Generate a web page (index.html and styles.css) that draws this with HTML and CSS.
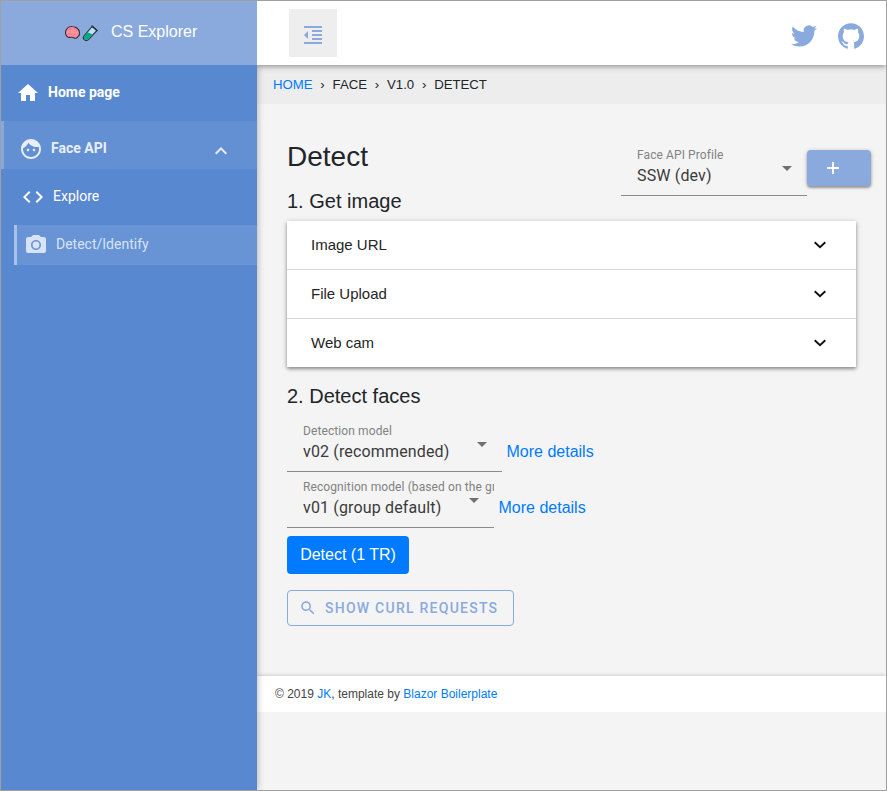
FILE: index.html
```html
<!DOCTYPE html>
<html lang="en">
<head>
<meta charset="utf-8">
<title>CS Explorer</title>
<link rel="stylesheet" href="styles.css">
</head>
<body>
<div class="app">
  <aside class="sidebar">
    <div class="brand">
      <svg class="brand-icons" width="36" height="20" viewBox="0 0 36 20">
        <path d="M1.5 9.500C1.500 6 4.500 3.300 8.200 3.500c3.800 0 7 2.600 7.300 5.800.2 2.200-.2 3.700-1.500 4.100-.6 1.600-2.100 2.200-3.500 1.600-1.500-.5-2.300-.9-3.700-.7C3.500 15 1.500 12.500 1.500 9.500z" fill="#f8919d" stroke="#3b2a32" stroke-width="1.100"/>
        <path d="M4 8c1-2 3-2.500 4.500-1.500M10 5.500c2 0 3 1.500 2.500 3M3.500 11.500c1.500-1.500 3-1 4 0s3 .5 4-.5" fill="none" stroke="#d65f74" stroke-width=".5"/>
        <path d="M28.200 3.500l4.800 4-8.300 8.800c-1.300 1.300-3.300 1.500-4.500.4s-1-3 .2-4.400z" fill="#b9e4f4" stroke="#26343d" stroke-width="1.100"/>
        <path d="M23.500 9.200l5.200 2.200-4.500 4.700c-1.100 1.100-2.600 1.200-3.600.3s-.8-2.400.2-3.700z" fill="#08a982"/>
        <path d="M28 3l5 4.500" stroke="#26343d" stroke-width="1.500" stroke-linecap="round"/>
      </svg>
      <span>CS Explorer</span>
    </div>
    <nav>
      <a class="nav-item home"><svg class="icon" viewBox="0 0 24 24"><path d="M10 20v-6h4v6h5v-8h3L12 3 2 12h3v8z"/></svg><span>Home page</span></a>
      <a class="nav-item group"><svg class="icon" viewBox="0 0 24 24"><path d="M9 11.750c-.69 0-1.250.56-1.250 1.250s.56 1.250 1.250 1.250 1.250-.56 1.250-1.250-.56-1.250-1.250-1.250zm6 0c-.69 0-1.250.56-1.250 1.250s.56 1.250 1.250 1.250 1.250-.56 1.250-1.250-.56-1.250-1.250-1.250zM12 2C6.480 2 2 6.480 2 12s4.480 10 10 10 10-4.480 10-10S17.520 2 12 2zm0 18c-4.410 0-8-3.590-8-8 0-.29.02-.58.05-.86 2.360-1.050 4.230-2.980 5.210-5.370C11.070 8.330 14.050 10 17.420 10c.78 0 1.530-.09 2.250-.26.21.71.33 1.470.33 2.260 0 4.410-3.590 8-8 8z"/></svg><span>Face API</span><svg class="icon caret" viewBox="0 0 24 24"><path d="M12 8l-6 6 1.410 1.410L12 10.830l4.590 4.580L18 14z"/></svg></a>
      <a class="nav-item explore"><svg class="icon" viewBox="0 0 24 24"><path d="M9.400 16.600L4.800 12l4.600-4.600L8 6l-6 6 6 6zm5.200 0l4.600-4.600-4.600-4.600L16 6l6 6-6 6z"/></svg><span>Explore</span></a>
      <a class="nav-item detect"><svg class="icon" viewBox="0 0 24 24"><path d="M9 2L7.170 4H4c-1.100 0-2 .9-2 2v12c0 1.100.9 2 2 2h16c1.100 0 2-.9 2-2V6c0-1.100-.9-2-2-2h-3.170L15 2zm3 15c-2.760 0-5-2.240-5-5s2.240-5 5-5 5 2.240 5 5-2.240 5-5 5z"/><circle cx="12" cy="12" r="3.400"/></svg><span>Detect/Identify</span></a>
    </nav>
  </aside>
  <div class="main">
    <header class="topbar">
      <button class="menu"><svg class="icon" viewBox="0 0 24 24"><path d="M11 17h10v-2H11zm-8-5l4 4V8zm0 9h18v-2H3zM3 3v2h18V3zm8 6h10V7H11zm0 4h10v-2H11z"/></svg></button>
      <div class="social">
        <svg width="26" height="26" viewBox="0 0 24 24"><path d="M23.950 4.570a10 10 0 0 1-2.820.77 4.960 4.960 0 0 0 2.160-2.720c-.95.55-2 .95-3.130 1.180a4.920 4.920 0 0 0-8.380 4.480C7.690 8.100 4.070 6.130 1.640 3.160a4.820 4.820 0 0 0-.67 2.480c0 1.710.87 3.210 2.190 4.100a4.900 4.900 0 0 1-2.230-.62v.06a4.920 4.920 0 0 0 3.950 4.830 5 5 0 0 1-2.210.08 4.940 4.940 0 0 0 4.600 3.420A9.870 9.870 0 0 1 0 19.540a13.990 13.990 0 0 0 7.550 2.210c9.050 0 14-7.500 14-13.980 0-.21 0-.42-.02-.63a9.940 9.940 0 0 0 2.420-2.570z"/></svg>
        <svg width="26" height="26" viewBox="0 0 24 24"><path d="M12 .297c-6.630 0-12 5.373-12 12 0 5.303 3.438 9.800 8.205 11.385.6.113.82-.258.82-.577 0-.285-.01-1.040-.015-2.040-3.338.724-4.042-1.610-4.042-1.610C4.422 18.070 3.633 17.700 3.633 17.700c-1.087-.744.084-.729.084-.729 1.205.084 1.838 1.236 1.838 1.236 1.070 1.835 2.809 1.305 3.495.998.108-.776.417-1.305.76-1.605-2.665-.3-5.466-1.332-5.466-5.930 0-1.310.465-2.380 1.235-3.220-.135-.303-.54-1.523.105-3.176 0 0 1.005-.322 3.300 1.230.96-.267 1.980-.399 3-.405 1.020.006 2.040.138 3 .405 2.280-1.552 3.285-1.230 3.285-1.230.645 1.653.24 2.873.12 3.176.765.840 1.230 1.910 1.230 3.220 0 4.610-2.805 5.625-5.475 5.920.42.360.81 1.096.81 2.220 0 1.606-.015 2.896-.015 3.286 0 .315.21.690.825.570C20.565 22.092 24 17.592 24 12.297c0-6.627-5.373-12-12-12"/></svg>
      </div>
    </header>
    <div class="crumbs"><a>HOME</a><i>›</i><span>FACE</span><i>›</i><span>V1.0</span><i>›</i><span>DETECT</span></div>
    <main class="content">
      <div class="title-row">
        <h1>Detect</h1>
        <div class="select profile"><label>Face API Profile</label><span>SSW (dev)</span></div>
        <button class="add"><svg width="18" height="18" viewBox="0 0 24 24"><path d="M20 13.200h-6.800V20h-2.400v-6.800H4v-2.400h6.800V4h2.400v6.800H20z"/></svg></button>
      </div>
      <h2>1. Get image</h2>
      <div class="panels">
        <div class="panel"><span>Image URL</span><svg class="icon" viewBox="0 0 24 24"><path d="M6.700 9.300l5.300 5 5.300-5"/></svg></div>
        <div class="panel"><span>File Upload</span><svg class="icon" viewBox="0 0 24 24"><path d="M6.700 9.300l5.300 5 5.300-5"/></svg></div>
        <div class="panel"><span>Web cam</span><svg class="icon" viewBox="0 0 24 24"><path d="M6.700 9.300l5.300 5 5.300-5"/></svg></div>
      </div>
      <h2 class="faces">2. Detect faces</h2>
      <div class="field"><div class="select detection"><label>Detection model</label><span>v02 (recommended)</span></div><a>More details</a></div>
      <div class="field"><div class="select recognition"><label>Recognition model (based on the group)</label><span>v01 (group default)</span></div><a>More details</a></div>
      <button class="primary">Detect (1 TR)</button>
      <button class="outlined"><svg width="18" height="18" viewBox="0 0 24 24"><path d="M15.500 14h-.79l-.28-.27C15.410 12.590 16 11.110 16 9.500 16 5.910 13.090 3 9.500 3S3 5.910 3 9.500 5.910 16 9.500 16c1.610 0 3.090-.59 4.230-1.570l.27.28v.79l5 4.990L20.490 19zm-6 0C7.010 14 5 11.990 5 9.500S7.010 5 9.500 5 14 7.010 14 9.500 11.990 14 9.500 14z"/></svg><span>SHOW CURL REQUESTS</span></button>
    </main>
    <footer><span>© 2019 <a>JK</a>, template by <a>Blazor Boilerplate</a></span></footer>
  </div>
</div>
</body>
</html>
```
FILE: styles.css
```css
* { box-sizing: border-box; }
body { margin: 0; color: #212529; font-family: "Liberation Sans", Arial, sans-serif; }
button { border: 0; padding: 0; font: inherit; }
svg { display: block; flex: none; fill: currentColor; }
a { color: #007bff; }
.icon { width: 24px; height: 24px; }

.app { display: flex; width: 887px; height: 791px; border: 1px solid #a0a0a0; background: #f4f4f4; overflow: hidden; }

.sidebar { position: relative; z-index: 2; flex: none; width: 256px; background: #5888d0; color: #fff; box-shadow: 0 0 7px rgba(0,0,0,.32); }
.brand { display: flex; align-items: center; height: 64px; padding-left: 63px; background: #8aaade; font-size: 16px; }
.brand span { margin: -2px 0 0 11px; }
.sidebar nav { font-family: Roboto, sans-serif; font-size: 14px; }
.nav-item { display: flex; align-items: center; gap: 8px; color: #fff; }
.nav-item span { margin-top: -3px; }
.home { height: 56px; padding-left: 15px; font-weight: 700; }
.group { height: 48px; padding: 16px 24px 0 15px; border-left: 3px solid #85a8de; background: #6390d3; color: #e8eefa; font-weight: 700; align-items: flex-start; }
.nav-item.group span { margin-top: 3px; }
.group .caret { margin: 2px 0 0 auto; }
.explore { height: 56px; padding-left: 20px; }
.detect { height: 40px; margin-left: 13px; padding-left: 7px; border-left: 3px solid #a9c1e8; background: #6893d5; color: #d7e3f6; }

.main { flex: 1; min-width: 0; display: flex; flex-direction: column; }
.topbar { position: relative; z-index: 3; display: flex; justify-content: space-between; align-items: flex-start; height: 64px; padding: 8px 22px 0 32px; background: #fff; color: #8aaade; box-shadow: 0 1px 6px rgba(0,0,0,.45); clip-path: inset(0 0 -10px 0); }
.menu { width: 48px; height: 48px; padding: 14px 12px 10px; background: #eee; color: #8aaade; }
.social { display: flex; gap: 21px; padding-top: 14px; }
.crumbs { display: flex; align-items: center; height: 39px; padding-left: 16px; background: #ededed; font-size: 13.200px; }
.crumbs i { width: 20px; text-align: center; font-style: normal; }

.content { display: flex; flex-direction: column; align-items: flex-start; height: 572px; padding: 39px 15px 0 30px; }
.title-row { display: flex; align-items: flex-start; width: 100%; height: 46px; }
h1, h2 { margin: 0; font-weight: 400; }
h1 { flex: 1; font-size: 28px; line-height: 28px; }
h2 { height: 32px; font-size: 20px; line-height: 24px; }
.select { position: relative; flex: none; height: 56px; padding: 8px 0 0 16px; border-bottom: 1px solid #8b8b8b; font-family: Roboto, sans-serif; overflow: hidden; white-space: nowrap; }
.select label { display: block; height: 18px; color: #828282; font-size: 12px; line-height: 14px; letter-spacing: .1px; }
.select span { display: block; color: #3b3b3b; font-size: 16px; line-height: 20px; letter-spacing: .15px; }
.select::after { content: ""; position: absolute; top: 26px; right: 15px; border: 5px solid transparent; border-top-color: #707070; border-bottom: 0; }
.profile { width: 186px; margin-top: -3px; }
.add { display: flex; width: 64px; height: 36px; margin-top: 7px; padding: 9px 0 0 17px; border-radius: 4px; background: #8aaade; color: #fff; box-shadow: 0 2px 2px rgba(0,0,0,.25), 0 1px 4px rgba(0,0,0,.25); }
.panels { width: 569px; background: #fff; box-shadow: 0 2px 3px rgba(0,0,0,.32), 0 1px 6px rgba(0,0,0,.2); }
.panel { display: flex; justify-content: space-between; align-items: center; height: 49px; padding: 0 24px; border-bottom: 1px solid #d8d8d8; color: #252525; font-size: 15px; }
.panel span { margin-top: -2px; }
.panel .icon { fill: none; stroke: #111; stroke-width: 1.900; }
.panel:last-child { height: 48px; border: 0; }
.faces { margin-top: 17px; }
.field { display: flex; align-items: flex-start; height: 56px; }
.field a { margin: 26px 0 0 4.500px; font-size: 16px; line-height: 20px; }
.detection { width: 215px; }
.recognition { width: 207px; }
.primary { width: 122px; height: 38px; margin-top: 8px; border-radius: 4px; background: #007bff; color: #fff; font-size: 16px; }
.outlined { display: flex; align-items: center; width: 227px; height: 36px; margin-top: 16px; padding-left: 11px; border: 1px solid #8aaade; border-radius: 4px; background: transparent; color: #8aaade; font: 500 14px Roboto, sans-serif; letter-spacing: 1.250px; }
.outlined span { margin-left: 8px; white-space: nowrap; }

footer { display: flex; align-items: center; height: 36px; padding-left: 18px; background: #fff; color: #444; font-size: 12px; box-shadow: 0 0 4px rgba(0,0,0,.25); clip-path: inset(-5px 0 0 0); }
```
